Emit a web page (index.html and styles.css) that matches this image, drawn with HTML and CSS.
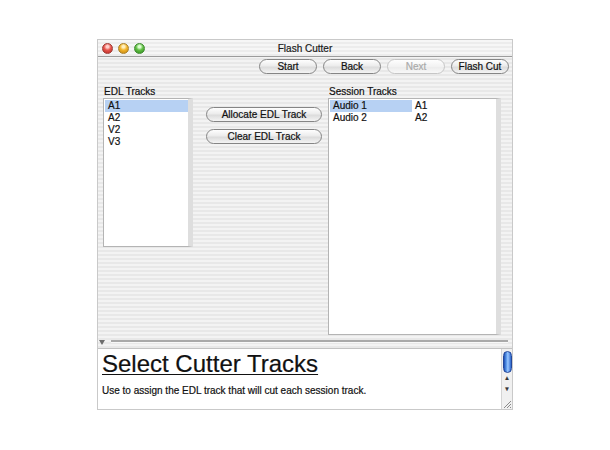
FILE: index.html
```html
<!DOCTYPE html>
<html lang="en">
<head>
    <meta charset="UTF-8">
    <title>Flash Cutter</title>
    <link rel="stylesheet" href="styles.css">
</head>
<body>
    <div class="window">
        <div class="titlebar">
            <div class="lights">
                <span class="light close"></span>
                <span class="light minimize"></span>
                <span class="light zoom"></span>
            </div>
            <div class="title">Flash Cutter</div>
            <div></div>
        </div>

        <div class="toolbar">
            <button class="pill">Start</button>
            <button class="pill">Back</button>
            <button class="pill" disabled>Next</button>
            <button class="pill">Flash Cut</button>
        </div>

        <div class="main">
            <div class="column">
                <div class="label">EDL Tracks</div>
                <ul class="list edl-list">
                    <li class="selected">A1</li>
                    <li>A2</li>
                    <li>V2</li>
                    <li>V3</li>
                </ul>
            </div>

            <div class="actions">
                <button class="pill wide">Allocate EDL Track</button>
                <button class="pill wide">Clear EDL Track</button>
            </div>

            <div class="column">
                <div class="label">Session Tracks</div>
                <div class="list session-list">
                    <div class="cell selected">Audio 1</div>
                    <div class="cell">A1</div>
                    <div class="cell">Audio 2</div>
                    <div class="cell">A2</div>
                </div>
            </div>
        </div>

        <div class="splitter">
            <span class="disclosure"></span>
            <span class="rule"></span>
        </div>

        <div class="help">
            <div class="help-text">
                <h1>Select Cutter Tracks</h1>
                <p>Use to assign the EDL track that will cut each session track.</p>
            </div>
            <div class="scrollbar">
                <span class="thumb"></span>
                <span class="arrow">&#9650;</span>
                <span class="arrow">&#9660;</span>
                <svg class="grip" width="8" height="8" viewBox="0 0 8 8">
                    <path d="M1 8 L8 1 M4 8 L8 4 M7 8 L8 7" stroke="#8a8a8a" stroke-width="1"/>
                </svg>
            </div>
        </div>
    </div>
</body>
</html>
```

FILE: styles.css
```css
body {
    margin: 0;
    background: #ffffff;
    font-family: "Liberation Sans", Arial, sans-serif;
    font-size: 10px;
    color: #111;
    -webkit-text-stroke: 0.2px;
}

.window {
    box-sizing: border-box;
    width: 416px;
    height: 371px;
    margin: 39px 0 0 97px;
    border: 1px solid #c9c9c9;
    display: flex;
    flex-direction: column;
    background: repeating-linear-gradient(#f3f3f3 0 2px, #e8e8e8 2px 4px);
}

/* title bar */
.titlebar {
    height: 16px;
    border-bottom: 1px solid #9c9c9c;
    display: grid;
    grid-template-columns: 1fr auto 1fr;
    align-items: center;
    background: repeating-linear-gradient(#f6f6f6 0 2px, #ececec 2px 4px);
}

.lights {
    display: flex;
    gap: 5px;
    padding-left: 4px;
}

.light {
    width: 11px;
    height: 11px;
    border-radius: 50%;
    box-sizing: border-box;
}

.close {
    background: radial-gradient(circle at 50% 30%, #ffd0cc 0 15%, #e8544c 45%, #b32a22 100%);
    border: 1px solid #9e3a34;
}

.minimize {
    background: radial-gradient(circle at 50% 30%, #fff0c0 0 15%, #f2b52c 45%, #c0800c 100%);
    border: 1px solid #a8802a;
}

.zoom {
    background: radial-gradient(circle at 50% 30%, #dcffd0 0 15%, #62c046 45%, #2e8a1a 100%);
    border: 1px solid #3f8a30;
}

.title {
    font-size: 10px;
    color: #1a1a1a;
}

/* toolbar */
.toolbar {
    display: flex;
    justify-content: flex-end;
    gap: 6px;
    padding: 2px 3px 0 0;
    height: 15px;
}

.pill {
    height: 15px;
    width: 58px;
    padding: 0;
    border: 1px solid #858585;
    border-radius: 8px;
    background: linear-gradient(#fefefe, #ececec 45%, #dcdcdc 55%, #f4f4f4);
    font-family: "Liberation Sans", Arial, sans-serif;
    font-size: 10px;
    line-height: 13px;
    color: #111;
    -webkit-text-stroke: 0.2px;
}

.pill:disabled {
    color: #aaa;
    border-color: #c6c6c6;
    background: linear-gradient(#fefefe, #f2f2f2 50%, #ececec 55%, #f8f8f8);
}

.pill.wide {
    width: 116px;
}

/* track lists */
.main {
    display: flex;
    height: 249px;
    margin-top: 12px;
    padding-left: 5px;
}

.label {
    height: 12px;
    line-height: 12px;
    padding-left: 1px;
}

.list {
    margin: 0;
    padding: 1px 0 0 1px;
    list-style: none;
    background: #fff;
    border: 1px solid #b4b4b4;
    border-right: 5px solid #dedede;
    box-sizing: border-box;
}

.list li,
.list .cell {
    height: 12px;
    line-height: 12px;
    padding-left: 3px;
}

.selected {
    background: #b7d1f3;
}

.edl-list {
    width: 90px;
    height: 149px;
}

.actions {
    display: flex;
    flex-direction: column;
    gap: 7px;
    padding: 21px 0 0 13px;
    width: 116px;
    margin-right: 6px;
}

.session-list {
    width: 173px;
    height: 237px;
    display: grid;
    grid-template-columns: 82px 1fr;
    align-content: start;
}

/* divider with disclosure triangle */
.splitter {
    height: 13px;
    display: flex;
    align-items: center;
    gap: 6px;
    padding: 0 4px 0 1px;
}

.disclosure {
    width: 0;
    height: 0;
    border-left: 3px solid transparent;
    border-right: 3px solid transparent;
    border-top: 5px solid #6d6d6d;
    margin-top: 1px;
}

.rule {
    flex: 1;
    height: 2px;
    background: #a9a9a9;
    border-bottom: 1px solid #f8f8f8;
}

/* help pane */
.help {
    flex: 1;
    display: flex;
    border-top: 1px solid #c2c2c2;
}

.help-text {
    flex: 1;
    background: #fff;
    padding: 3px 4px 0 4px;
}

.help-text h1 {
    margin: 0;
    font-size: 24px;
    line-height: 24px;
    font-weight: normal;
    text-decoration: underline;
    text-decoration-thickness: 1px;
    text-underline-offset: 2px;
    color: #111;
}

.help-text p {
    margin: 9px 0 0;
    font-size: 10px;
    line-height: 12px;
}

.scrollbar {
    width: 10px;
    background: #f0f0f0;
    border-left: 1px solid #d4d4d4;
    display: flex;
    flex-direction: column;
    align-items: center;
}

.thumb {
    width: 9px;
    height: 22px;
    margin-top: 2px;
    border-radius: 5px;
    background: linear-gradient(90deg, #1b4fb5, #6aa6f2 40%, #9cc8ff 55%, #2c66cc);
    border: 1px solid #23479a;
    box-sizing: border-box;
}

.arrow {
    font-size: 6px;
    line-height: 11px;
    color: #333;
}

.arrow:first-of-type {
    margin-top: 3px;
}

.grip {
    margin-top: auto;
    margin-bottom: 1px;
}
```
